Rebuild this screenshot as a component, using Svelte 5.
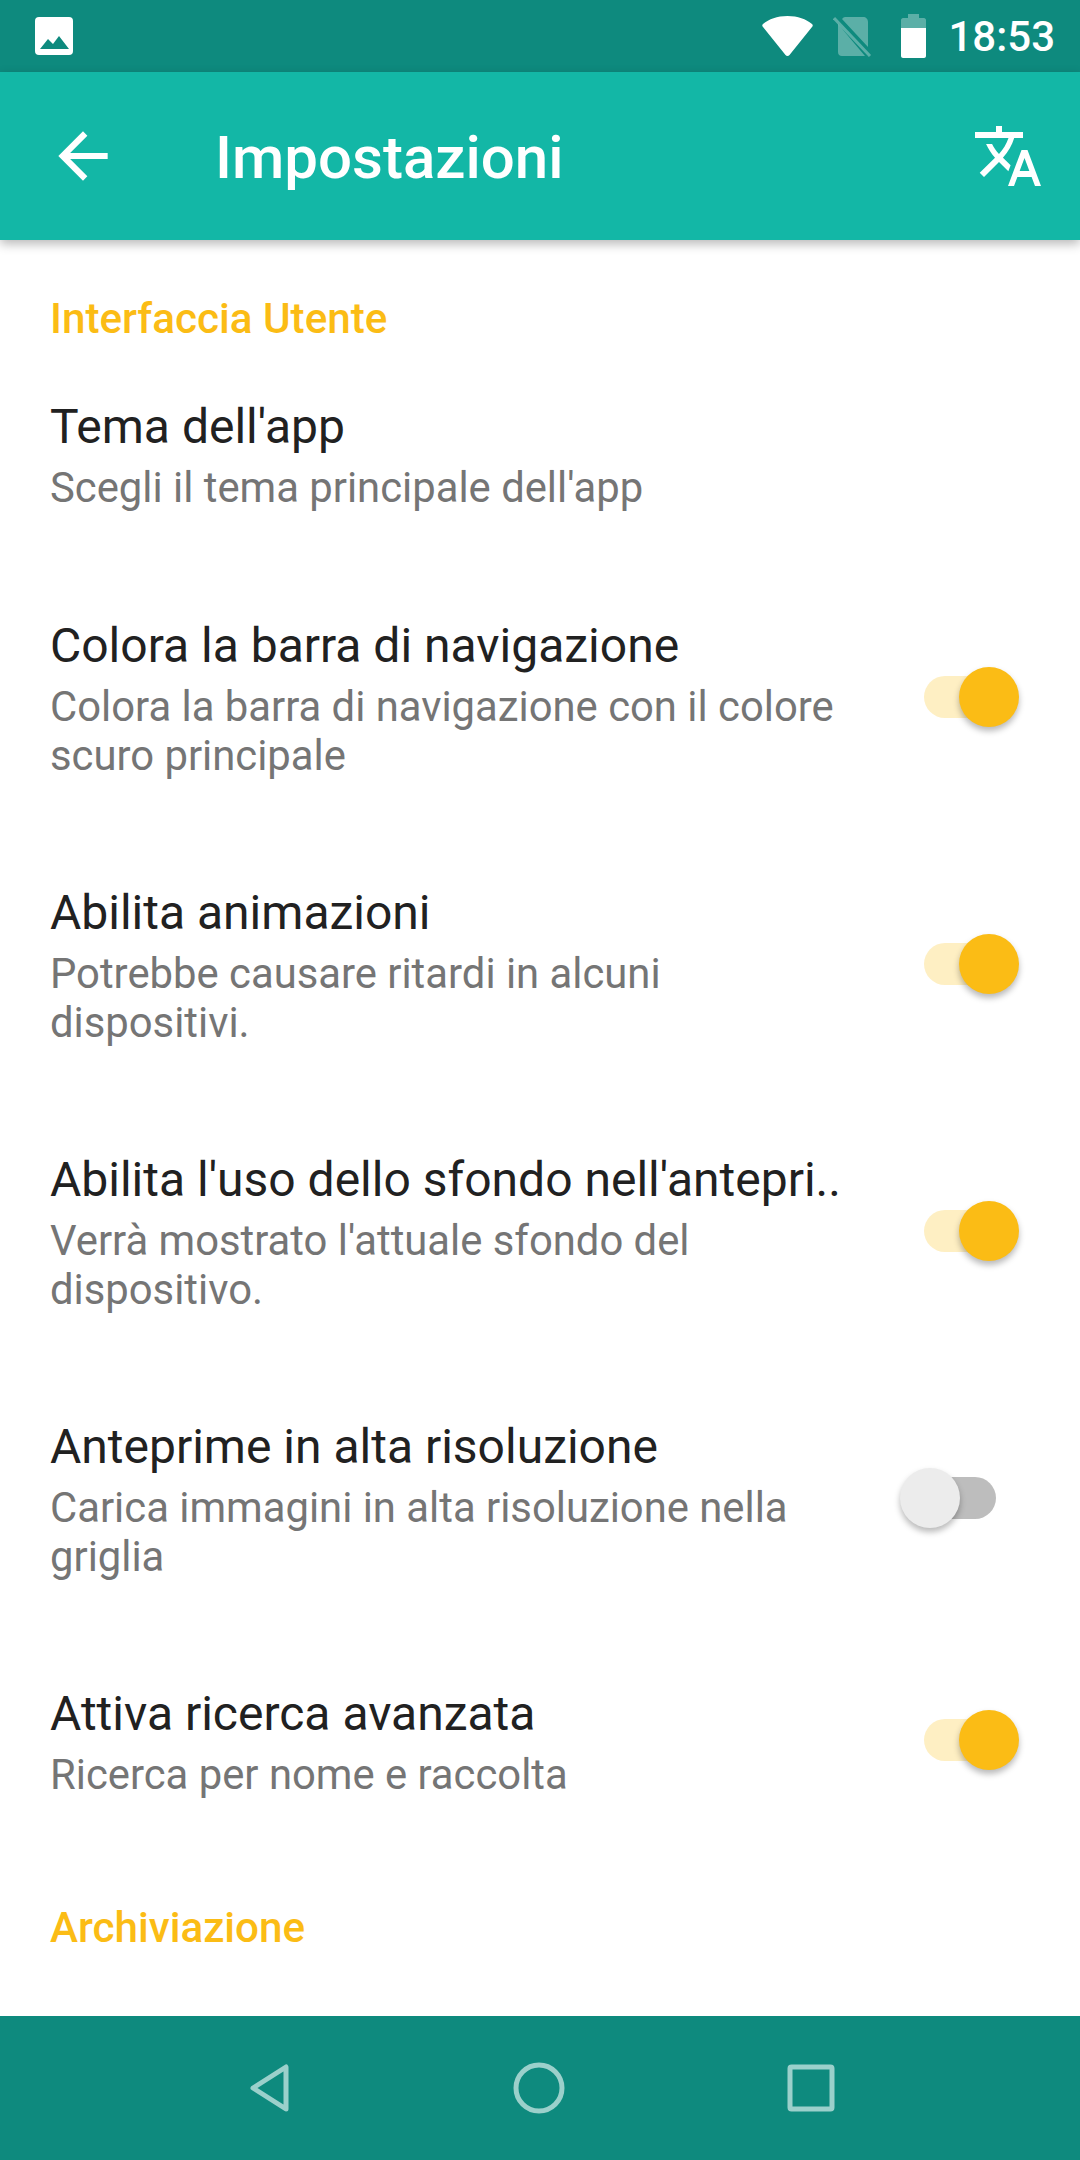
<script>
  const firstSection = [
    { title: "Tema dell'app", sub: "Scegli il tema principale dell'app", toggle: null },
    { title: 'Colora la barra di navigazione', sub: 'Colora la barra di navigazione con il colore scuro principale', toggle: true },
    { title: 'Abilita animazioni', sub: 'Potrebbe causare ritardi in alcuni dispositivi.', toggle: true },
    { title: "Abilita l'uso dello sfondo nell'antepri..", sub: "Verrà mostrato l'attuale sfondo del dispositivo.", toggle: true },
    { title: 'Anteprime in alta risoluzione', sub: 'Carica immagini in alta risoluzione nella griglia', toggle: false },
    { title: 'Attiva ricerca avanzata', sub: 'Ricerca per nome e raccolta', toggle: true }
  ];
</script>

<div class="screen">
  <div class="statusbar">
    <svg class="pic" width="38" height="38" viewBox="0 0 38 38">
      <rect width="38" height="38" rx="4" fill="#fff" />
      <path d="M5 32 L13 22 L18 27 L24 19 L34 32 Z" fill="#0e8a7e" />
    </svg>
    <div class="status-right">
      <svg width="51" height="42" viewBox="0 0 51 42">
        <path d="M25.5 1 C15 1 7 4 1 9 C0 10 0 11 1 12 L23.5 40 C24.5 41.3 26.5 41.3 27.5 40 L50 12 C51 11 51 10 50 9 C44 4 36 1 25.5 1 Z" fill="#fff" />
      </svg>
      <svg class="sim" width="40" height="44" viewBox="0 0 40 44">
        <path d="M5 10 L32 42 H9 C6.500 42 5 40.500 5 38 Z M12 3 H30 C33 3 35 5 35 8 V33 L9 5 C10 3.800 11 3 12 3 Z" fill="#fff" fill-opacity=".32" />
        <path d="M1 4 L37 42" stroke="#fff" stroke-opacity=".32" stroke-width="3" />
      </svg>
      <svg class="battery" width="25" height="44" viewBox="0 0 25 44">
        <path d="M7 0 H18 V4 H23 C24 4 25 5 25 6 V14 H0 V6 C0 5 1 4 2 4 H7 Z" fill="#fff" fill-opacity=".32" />
        <path d="M0 14 H25 V42 C25 43 24 44 23 44 H2 C1 44 0 43 0 42 Z" fill="#fff" />
      </svg>
      <span class="time">18:53</span>
    </div>
  </div>

  <header class="toolbar">
    <svg class="back" width="74" height="74" viewBox="0 0 24 24">
      <path d="M20 11H7.830l5.590-5.590L12 4l-8 8 8 8 1.410-1.410L7.830 13H20v-2z" fill="#fff" />
    </svg>
    <h1>Impostazioni</h1>
    <svg class="translate" width="72" height="72" viewBox="0 0 24 24">
      <path d="M12.870 15.070l-2.540-2.510.03-.03c1.740-1.940 2.980-4.170 3.710-6.530H17V4h-7V2H8v2H1v1.990h11.170C11.500 7.920 10.440 9.750 9 11.350 8.070 10.320 7.300 9.190 6.690 8h-2c.73 1.630 1.730 3.170 2.980 4.560l-5.090 5.020L4 19l5-5 3.110 3.110.76-2.040zM18.500 10h-2L12 22h2l1.120-3h4.750L21 22h2l-4.500-12zm-2.620 7l1.620-4.330L19.120 17h-3.240z" fill="#fff" />
    </svg>
  </header>

  <main class="content">
    <div class="section">Interfaccia Utente</div>
    {#each firstSection as row}
      <div class="row">
        <div class="text">
          <div class="title">{row.title}</div>
          <div class="sub">{row.sub}</div>
        </div>
        {#if row.toggle !== null}
          <div class="switch" class:on={row.toggle}>
            <span class="track"></span>
            <span class="thumb"></span>
          </div>
        {/if}
      </div>
    {/each}
    <div class="section second">Archiviazione</div>
  </main>

  <nav class="navbar">
    <svg width="44" height="50" viewBox="0 0 44 50">
      <path d="M38 4 V46 L5 25 Z" fill="none" stroke="#9bd0cb" stroke-width="5" stroke-linejoin="round" />
    </svg>
    <svg width="54" height="54" viewBox="0 0 54 54">
      <circle cx="27" cy="27" r="23" fill="none" stroke="#9bd0cb" stroke-width="5" />
    </svg>
    <svg width="50" height="50" viewBox="0 0 50 50">
      <rect x="4" y="4" width="42" height="42" rx="1.500" fill="none" stroke="#9bd0cb" stroke-width="5" />
    </svg>
  </nav>
</div>

<style>
  :global(body) {
    margin: 0;
    background: #fff;
  }

  .screen {
    width: 1080px;
    height: 2160px;
    display: flex;
    flex-direction: column;
    font-family: Roboto, "Liberation Sans", sans-serif;
    overflow: hidden;
  }

  .statusbar {
    height: 72px;
    flex: none;
    background: #0e8a7e;
    display: flex;
    align-items: center;
    justify-content: space-between;
    padding: 0 25px 0 35px;
  }

  .status-right {
    display: flex;
    align-items: center;
  }

  .sim {
    margin-left: 20px;
  }

  .battery {
    margin-left: 28px;
  }

  .time {
    margin-left: 22px;
    color: #fff;
    font-size: 42px;
    font-weight: 500;
  }

  .toolbar {
    height: 168px;
    flex: none;
    background: #13b7a6;
    display: flex;
    align-items: center;
    padding: 0 36px 0 46px;
    box-shadow: 0 4px 10px rgba(0, 0, 0, 0.28);
    position: relative;
    z-index: 1;
  }

  .toolbar svg {
    flex: none;
  }

  h1 {
    margin: 2px 0 0 95px;
    flex: 1;
    color: #fff;
    font-size: 60px;
    font-weight: 500;
  }

  .content {
    flex: 1;
    min-height: 0;
    overflow: hidden;
  }

  .section {
    color: #fbbc15;
    font-size: 42.2px;
    font-weight: 500;
    line-height: 50px;
    padding: 54px 50px 0;
  }

  .section.second {
    padding-top: 51px;
  }

  .row {
    display: flex;
    align-items: center;
    justify-content: space-between;
    padding: 50px 24px 53px 50px;
  }

  .section + .row {
    padding-top: 53px;
    padding-bottom: 54px;
  }

  .text {
    width: 800px;
  }

  .title {
    color: #212121;
    font-size: 48px;
    line-height: 60px;
    white-space: nowrap;
    margin-bottom: 6px;
  }

  .sub {
    color: #757575;
    font-size: 41.8px;
    line-height: 49px;
  }

  .switch {
    position: relative;
    width: 156px;
    height: 60px;
    flex: none;
    margin-bottom: 3px;
  }

  .track {
    position: absolute;
    left: 24px;
    top: 9px;
    width: 72px;
    height: 42px;
    border-radius: 21px;
    background: #bdbdbd;
  }

  .thumb {
    position: absolute;
    left: 0;
    top: 0;
    width: 60px;
    height: 60px;
    border-radius: 50%;
    background: #ececec;
    box-shadow: 0 4px 6px rgba(0, 0, 0, 0.28);
  }

  .switch.on .track {
    background: #feefc3;
  }

  .switch.on .thumb {
    left: 59px;
    background: #fbbc15;
  }

  .navbar {
    height: 144px;
    flex: none;
    background: #0e8a7e;
    display: flex;
    align-items: center;
    justify-content: center;
    gap: 220px;
    padding-left: 4px;
  }
</style>
